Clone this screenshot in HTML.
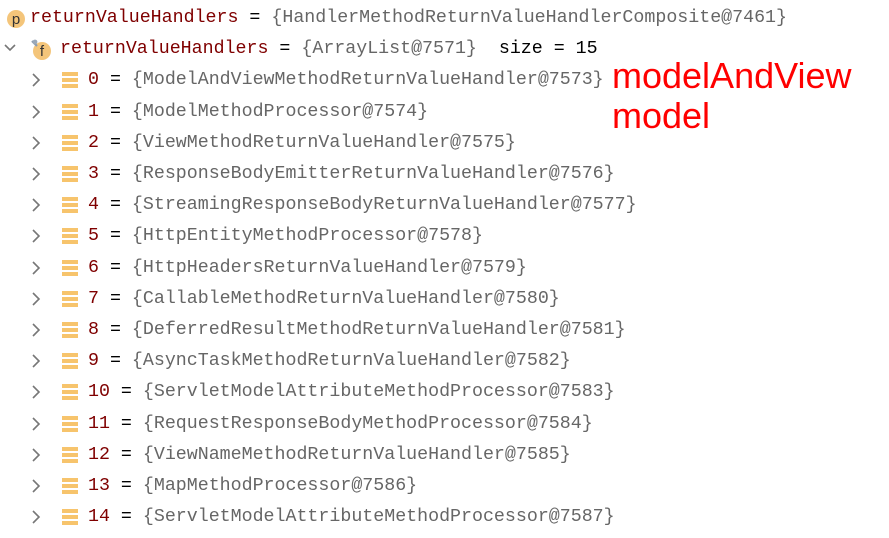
<!DOCTYPE html>
<html><head><style>
body{margin:0;width:889px;height:538px;background:#fff;overflow:hidden;position:relative;font-family:"Liberation Mono",monospace;font-size:18.3px}
.r{position:absolute;left:0;height:31px;line-height:31px;white-space:pre;width:889px}
.n{color:#7f0000}.v{color:#666}.k{color:#000}
.chev{position:absolute}
.ic{position:absolute;left:62px;top:7px;width:16px;height:17px}
.ic i{display:block;height:4px;background:#f7c46c;margin-bottom:2px}
.red{position:absolute;left:612px;color:#ff0000;font-family:"Liberation Sans",sans-serif;font-size:36px;line-height:40px}
</style></head><body>
<div class="r" style="top:3px"><svg style="position:absolute;left:6px;top:6px" width="20" height="20"><circle cx="10" cy="10" r="9" fill="#f4c57a"/><text x="10" y="15" text-anchor="middle" font-family="Liberation Sans" font-size="15" fill="#333">p</text></svg><span style="position:absolute;left:30px"><span class="n">returnValueHandlers</span><span class="k"> = </span><span class="v">{HandlerMethodReturnValueHandlerComposite@7461}</span></span></div>
<div class="r" style="top:34.2px"><svg class="chev" style="left:3px;top:9px" width="14" height="10"><path d="M2 2l5 5 5-5" stroke="#777" stroke-width="1.6" fill="none"/></svg><svg style="position:absolute;left:29px;top:3px" width="24" height="24"><circle cx="13" cy="14" r="9" fill="#f4c57a"/><path d="M3 4l5 5" stroke="#8a9bb0" stroke-width="2.2"/><circle cx="6" cy="5" r="2.4" fill="#9aa8b8"/><text x="13" y="19" text-anchor="middle" font-family="Liberation Sans" font-size="15" fill="#333">f</text></svg><span style="position:absolute;left:60px"><span class="n">returnValueHandlers</span><span class="k"> = </span><span class="v">{ArrayList@7571}</span><span class="k">  size = 15</span></span></div>
<div id="rows"></div>
<div class="red" style="top:56px">modelAndView</div>
<div class="red" style="top:96px">model</div>
<script>
var d=["ModelAndViewMethodReturnValueHandler@7573","ModelMethodProcessor@7574","ViewMethodReturnValueHandler@7575","ResponseBodyEmitterReturnValueHandler@7576","StreamingResponseBodyReturnValueHandler@7577","HttpEntityMethodProcessor@7578","HttpHeadersReturnValueHandler@7579","CallableMethodReturnValueHandler@7580","DeferredResultMethodReturnValueHandler@7581","AsyncTaskMethodReturnValueHandler@7582","ServletModelAttributeMethodProcessor@7583","RequestResponseBodyMethodProcessor@7584","ViewNameMethodReturnValueHandler@7585","MapMethodProcessor@7586","ServletModelAttributeMethodProcessor@7587"];
var h="";
for(var i=0;i<15;i++){var t=3+31.2*(i+2);
h+='<div class="r" style="top:'+t+'px"><svg class="chev" style="left:30px;top:7px" width="12" height="16"><path d="M3 2l6 6-6 6" stroke="#777" stroke-width="1.6" fill="none"/></svg><div class="ic"><i></i><i></i><i></i></div><span style="position:absolute;left:88px"><span class="n">'+i+'</span><span class="k"> = </span><span class="v">{'+d[i]+'}</span></span></div>';}
document.getElementById("rows").innerHTML=h;
</script>
</body></html>
